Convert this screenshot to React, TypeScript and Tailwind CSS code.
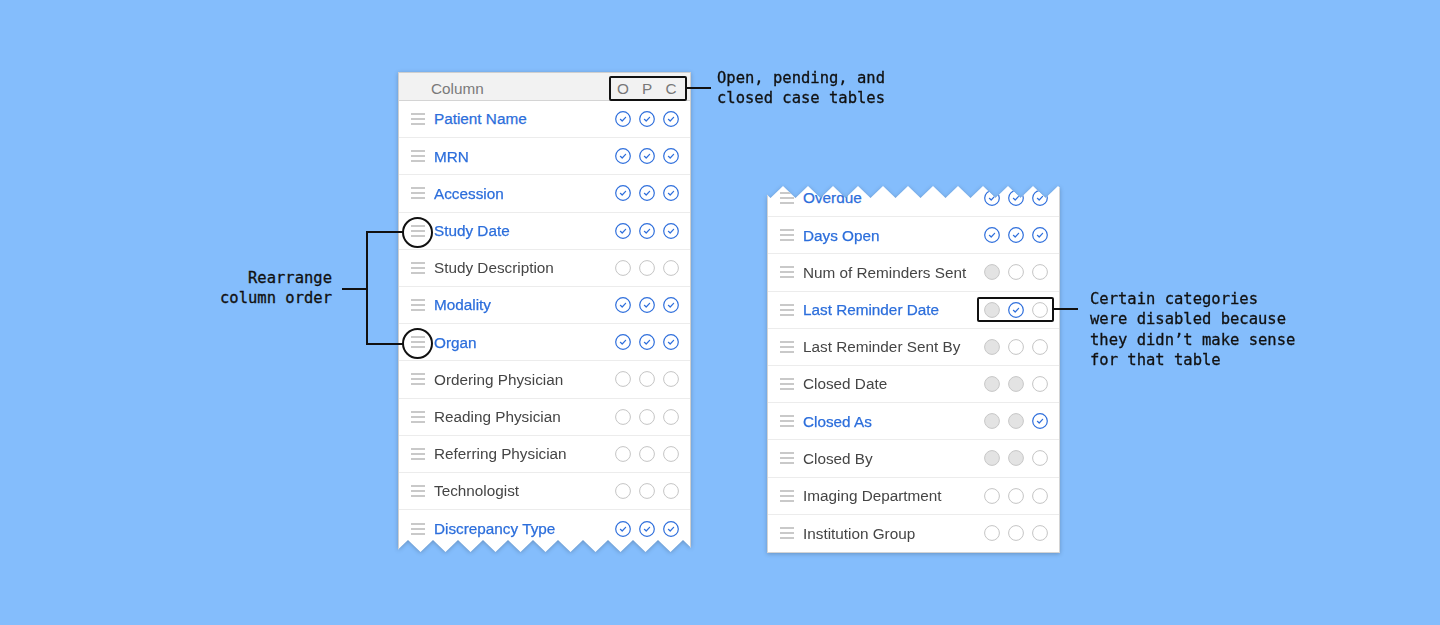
import React from "react";

type S = "c" | "e" | "d";
type Row = { label: string; on: boolean; s: S[] };

const leftRows: Row[] = [
  { label: "Patient Name", on: true, s: ["c", "c", "c"] },
  { label: "MRN", on: true, s: ["c", "c", "c"] },
  { label: "Accession", on: true, s: ["c", "c", "c"] },
  { label: "Study Date", on: true, s: ["c", "c", "c"] },
  { label: "Study Description", on: false, s: ["e", "e", "e"] },
  { label: "Modality", on: true, s: ["c", "c", "c"] },
  { label: "Organ", on: true, s: ["c", "c", "c"] },
  { label: "Ordering Physician", on: false, s: ["e", "e", "e"] },
  { label: "Reading Physician", on: false, s: ["e", "e", "e"] },
  { label: "Referring Physician", on: false, s: ["e", "e", "e"] },
  { label: "Technologist", on: false, s: ["e", "e", "e"] },
  { label: "Discrepancy Type", on: true, s: ["c", "c", "c"] },
];

const rightRows: Row[] = [
  { label: "Overdue", on: true, s: ["c", "c", "c"] },
  { label: "Days Open", on: true, s: ["c", "c", "c"] },
  { label: "Num of Reminders Sent", on: false, s: ["d", "e", "e"] },
  { label: "Last Reminder Date", on: true, s: ["d", "c", "e"] },
  { label: "Last Reminder Sent By", on: false, s: ["d", "e", "e"] },
  { label: "Closed Date", on: false, s: ["d", "d", "e"] },
  { label: "Closed As", on: true, s: ["d", "d", "c"] },
  { label: "Closed By", on: false, s: ["d", "d", "e"] },
  { label: "Imaging Department", on: false, s: ["e", "e", "e"] },
  { label: "Institution Group", on: false, s: ["e", "e", "e"] },
];

function Dot({ s }: { s: S }) {
  if (s === "c") {
    return (
      <svg width="16" height="16" viewBox="0 0 16 16" className="block">
        <circle cx="8" cy="8" r="7.3" fill="#fff" stroke="#2f6fdc" strokeWidth="1.2" />
        <path d="M5.4 8.3 L7.2 10 L10.6 6.3" fill="none" stroke="#2f6fdc" strokeWidth="1.2" strokeLinecap="round" strokeLinejoin="round" />
      </svg>
    );
  }
  if (s === "d") {
    return (
      <svg width="16" height="16" viewBox="0 0 16 16" className="block">
        <circle cx="8" cy="8" r="7.4" fill="#e3e3e3" stroke="#c7c7c7" strokeWidth="1" />
      </svg>
    );
  }
  return (
    <svg width="16" height="16" viewBox="0 0 16 16" className="block">
      <circle cx="8" cy="8" r="7.4" fill="#fff" stroke="#c4c4c4" strokeWidth="1" />
    </svg>
  );
}

function Handle() {
  return (
    <div className="flex flex-col gap-[3px] w-[14px] shrink-0">
      <div className="h-[2px] bg-[#c9c9c9]" />
      <div className="h-[2px] bg-[#c9c9c9]" />
      <div className="h-[2px] bg-[#c9c9c9]" />
    </div>
  );
}

function RowItem({ r, last }: { r: Row; last?: boolean }) {
  return (
    <div
      className={
        "flex items-center h-[37.2px] pl-[12px] pr-[11px] " +
        (last ? "" : "border-b border-[#ececec]")
      }
    >
      <Handle />
      <div
        className={
          "ml-[9px] flex-1 text-[15.3px] leading-none " +
          (r.on
            ? "text-[#2c6edb] [-webkit-text-stroke:0.25px_#2c6edb]"
            : "text-[#454545]")
        }
      >
        {r.label}
      </div>
      <div className="flex gap-2">
        {r.s.map((s, i) => (
          <Dot key={i} s={s} />
        ))}
      </div>
    </div>
  );
}

function zigBottom(w: number, h: number, depth: number) {
  const pts: string[] = ["0px 0px", `${w}px 0px`];
  const seq: string[] = [];
  for (let k = 0; k * 25 - 2.5 < w + 25; k++) {
    seq.push(`${k * 25 - 2.5}px ${h}px`);
    seq.push(`${k * 25 + 10}px ${h - depth}px`);
  }
  seq.reverse();
  return `polygon(${pts.concat(seq).join(", ")})`;
}

function zigTop(w: number, h: number, top: number, depth: number) {
  const seq: string[] = [];
  for (let k = -1; k * 25 < w + 25; k++) {
    seq.push(`${k * 25 + 3.5}px ${top + depth}px`);
    seq.push(`${k * 25 + 16}px ${top}px`);
  }
  return `polygon(${seq.join(", ")}, ${w + 20}px ${h}px, -20px ${h}px)`;
}

const mono = { fontFamily: '"DejaVu Sans Mono", "Liberation Mono", monospace' };

export default function App() {
  return (
    <div
      className="relative w-[1440px] h-[625px] overflow-hidden bg-[#84bdfc] flex items-start"
      style={{ fontFamily: '"Liberation Sans", Arial, sans-serif' }}
    >
      {/* Left panel */}
      <div className="ml-[398px] mt-[72px] w-[293px] drop-shadow-[0_1px_2px_rgba(0,0,0,0.22)]">
        <div
          className="bg-white border-x border-t border-[#cfcfcf] h-[480px]"
          style={{ clipPath: zigBottom(293, 480, 12) }}
        >
          <div className="flex items-center h-[28px] pt-[4px] bg-[#f2f2f2] border-b border-[#d4d4d4] pl-[32px] pr-[11px]">
            <div className="flex-1 text-[15.3px] leading-none text-[#7a7a7a]">Column</div>
            <div className="flex gap-2 text-[15.3px] leading-none text-[#787878]">
              <div className="w-4 text-center">O</div>
              <div className="w-4 text-center">P</div>
              <div className="w-4 text-center">C</div>
            </div>
          </div>
          {leftRows.map((r, i) => (
            <RowItem key={r.label} r={r} last={i === leftRows.length - 1} />
          ))}
        </div>
      </div>

      {/* Right panel */}
      <div className="ml-[76px] mt-[180px] w-[293px] drop-shadow-[0_1px_2px_rgba(0,0,0,0.22)]">
        <div
          className="bg-white border-x border-b border-[#d4d4d4]"
          style={{ clipPath: zigTop(293, 400, 6, 12) }}
        >
          {rightRows.map((r, i) => (
            <RowItem key={r.label} r={r} last={i === rightRows.length - 1} />
          ))}
        </div>
      </div>

      {/* Annotation: O P C */}
      <div className="absolute left-[609px] top-[76px] w-[78px] h-[25px] border-2 border-[#111] rounded-[2px]" />
      <div className="absolute left-[687px] top-[87px] w-[24px] h-[2px] bg-[#111]" />
      <div
        className="absolute left-[717px] top-[68px] text-[15.5px] leading-[20px] text-[#111] whitespace-pre [-webkit-text-stroke:0.3px_#111]"
        style={mono}
      >
        {"Open, pending, and\nclosed case tables"}
      </div>

      {/* Annotation: Rearrange */}
      <div
        className="absolute left-[180px] w-[152px] top-[268px] text-right text-[15.5px] leading-[20px] text-[#111] [-webkit-text-stroke:0.3px_#111]"
        style={mono}
      >
        <div>Rearrange</div>
        <div>column order</div>
      </div>
      <div className="absolute left-[342px] top-[288px] w-[26px] h-[2px] bg-[#111]" />
      <div className="absolute left-[366px] top-[231px] w-[2px] h-[114px] bg-[#111]" />
      <div className="absolute left-[366px] top-[231px] w-[37px] h-[2px] bg-[#111]" />
      <div className="absolute left-[366px] top-[343px] w-[37px] h-[2px] bg-[#111]" />
      <div className="absolute left-[402px] top-[217px] w-[31px] h-[31px] rounded-full border-2 border-[#111]" />
      <div className="absolute left-[402px] top-[328px] w-[31px] h-[31px] rounded-full border-2 border-[#111]" />

      {/* Annotation: disabled */}
      <div className="absolute left-[977px] top-[297px] w-[77px] h-[25px] border-2 border-[#111] rounded-[2px]" />
      <div className="absolute left-[1054px] top-[308px] w-[24px] h-[2px] bg-[#111]" />
      <div
        className="absolute left-[1090px] top-[289px] text-[15.5px] leading-[20.4px] text-[#111] [-webkit-text-stroke:0.3px_#111]"
        style={mono}
      >
        <div>Certain categories</div>
        <div>were disabled because</div>
        <div>they didn’t make sense</div>
        <div>for that table</div>
      </div>
    </div>
  );
}
